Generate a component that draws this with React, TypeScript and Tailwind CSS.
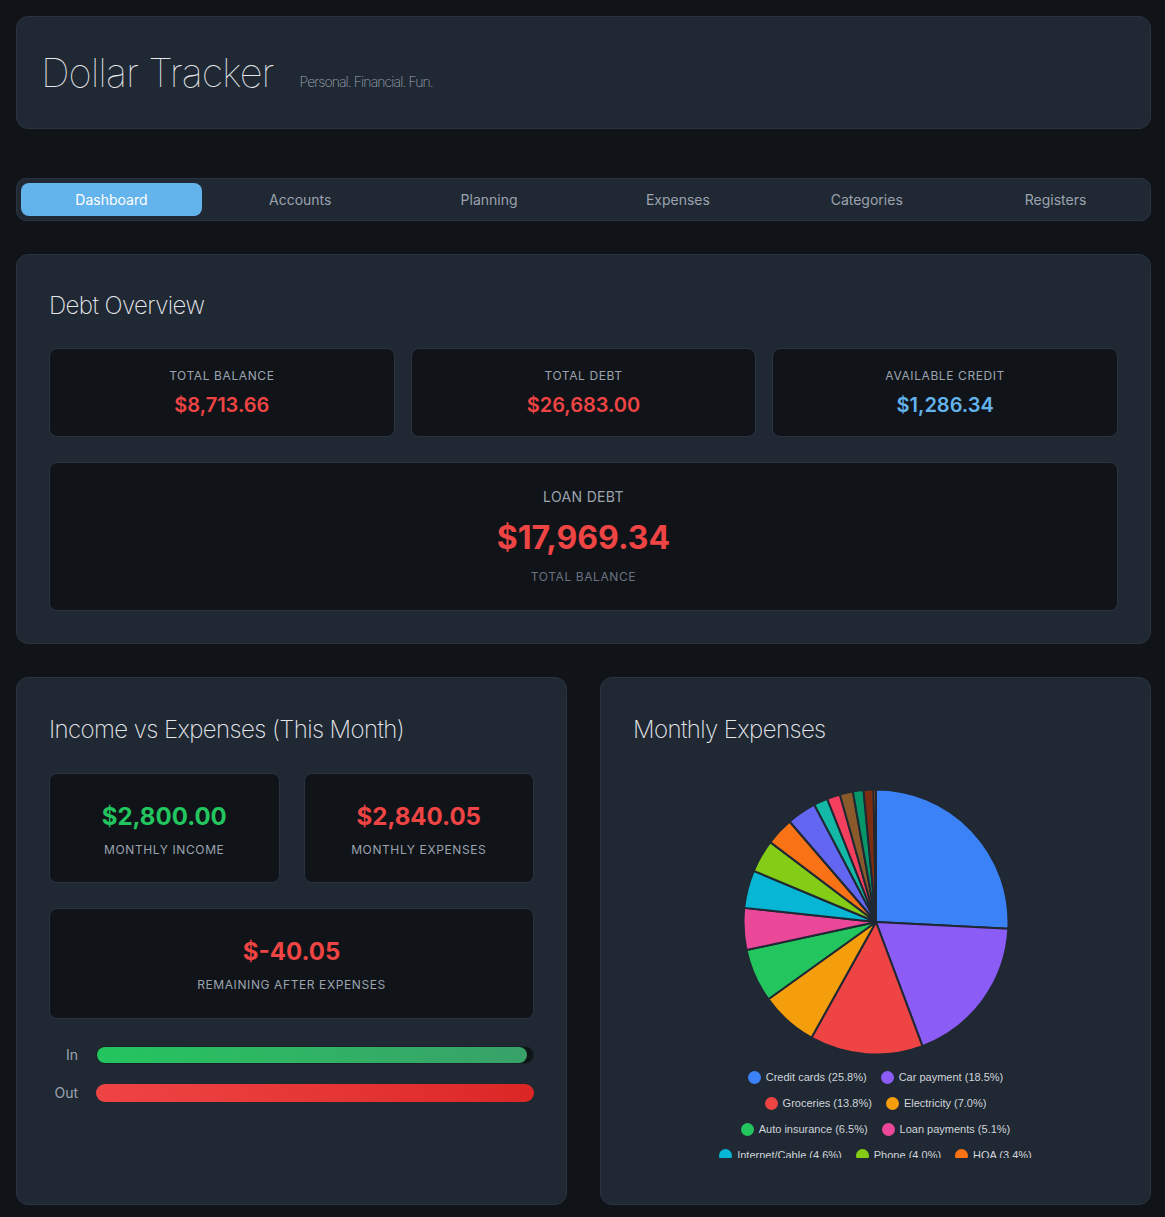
import React from "react"

const tabs = ["Dashboard", "Accounts", "Planning", "Expenses", "Categories", "Registers"]

const slices = [
  { label: "Credit cards", pct: 25.8, color: "#3b82f6" },
  { label: "Car payment", pct: 18.5, color: "#8b5cf6" },
  { label: "Groceries", pct: 13.8, color: "#ef4444" },
  { label: "Electricity", pct: 7.0, color: "#f59e0b" },
  { label: "Auto insurance", pct: 6.5, color: "#22c55e" },
  { label: "Loan payments", pct: 5.1, color: "#ec4899" },
  { label: "Internet/Cable", pct: 4.6, color: "#06b6d4" },
  { label: "Phone", pct: 4.0, color: "#84cc16" },
  { label: "HOA", pct: 3.4, color: "#f97316" },
  { label: "Subscriptions", pct: 3.6, color: "#6366f1" },
  { label: "Gas", pct: 1.7, color: "#14b8a6" },
  { label: "Dining", pct: 1.6, color: "#f43f5e" },
  { label: "Water", pct: 1.6, color: "#8b5a2b" },
  { label: "Gym", pct: 1.3, color: "#059669" },
  { label: "Trash", pct: 1.2, color: "#7c2d12" },
  { label: "Misc", pct: 0.3, color: "#ea580c" },
]

// legend rows the way the chart packs them
const legendRows = [
  [0, 1],
  [2, 3],
  [4, 5],
  [6, 7, 8],
]

function PieChart() {
  const cx = 134
  const cy = 134
  const r = 132.5
  const total = slices.reduce((s, x) => s + x.pct, 0)
  let acc = 0
  return (
    <svg width="268" height="268" viewBox="0 0 268 268">
      {slices.map((s) => {
        const a0 = (acc / total) * Math.PI * 2 - Math.PI / 2
        acc += s.pct
        const a1 = (acc / total) * Math.PI * 2 - Math.PI / 2
        const x0 = cx + r * Math.cos(a0)
        const y0 = cy + r * Math.sin(a0)
        const x1 = cx + r * Math.cos(a1)
        const y1 = cy + r * Math.sin(a1)
        const large = a1 - a0 > Math.PI ? 1 : 0
        return (
          <path
            key={s.label}
            d={`M${cx} ${cy} L${x0} ${y0} A${r} ${r} 0 ${large} 1 ${x1} ${y1} Z`}
            fill={s.color}
            stroke="#1f2833"
            strokeWidth="2"
            strokeLinejoin="round"
          />
        )
      })}
    </svg>
  )
}

function StatCard({ label, value, color }: { label: string; value: string; color: string }) {
  return (
    <div className="rounded-lg border border-[#2a3441] bg-[#101419] pt-[17px] pb-[17px] text-center">
      <div className="text-xs leading-[19px] uppercase tracking-wider text-[#9ca3af]">{label}</div>
      <div className={`mt-[6px] text-xl leading-7 font-semibold ${color}`}>{value}</div>
    </div>
  )
}

function BigStat({ value, label, color, pb }: { value: string; label: string; color: string; pb: string }) {
  return (
    <div className={`rounded-lg border border-[#2a3441] bg-[#101419] px-4 pt-[25px] text-center ${pb}`}>
      <div className={`text-2xl leading-9 font-bold ${color}`}>{value}</div>
      <div className="mt-[7px] text-xs leading-4 uppercase tracking-wider text-[#9ca3af]">{label}</div>
    </div>
  )
}

export default function App() {
  return (
    <div className="min-h-screen bg-[#101418] pt-4 pb-4 pl-4 pr-[14px] font-['Inter',sans-serif]">
      {/* header */}
      <header className="flex items-baseline gap-[26px] rounded-xl border border-[#2a3441] bg-[#1f2833] px-6 pt-8 pb-[31px]">
        <h1 className="text-[40px] leading-[48px] font-thin tracking-tight text-[#e5e7eb]">Dollar Tracker</h1>
        <span className="text-sm font-extralight tracking-[-0.065em] text-[#9ca3af]">Personal. Financial. Fun.</span>
      </header>

      {/* tabs */}
      <nav className="mt-[49px] flex gap-2 rounded-[10px] border border-[#2a3441] bg-[#1f2833] p-1">
        {tabs.map((t, i) => (
          <button
            key={t}
            className={
              i === 0
                ? "flex-1 h-[33px] rounded-lg bg-[#63b3ed] text-sm text-white"
                : "flex-1 h-[33px] rounded-lg text-sm text-[#9ca3af]"
            }
          >
            {t}
          </button>
        ))}
      </nav>

      {/* debt overview */}
      <section className="mt-[33px] rounded-xl border border-[#2a3441] bg-[#1f2833] px-8 pt-[35px] pb-8">
        <h2 className="mb-[26px] text-2xl leading-8 font-extralight tracking-tight text-[#e5e7eb]">Debt Overview</h2>
        <div className="grid grid-cols-3 gap-4">
          <StatCard label="Total Balance" value="$8,713.66" color="text-[#ef4444]" />
          <StatCard label="Total Debt" value="$26,683.00" color="text-[#ef4444]" />
          <StatCard label="Available Credit" value="$1,286.34" color="text-[#63b3ed]" />
        </div>
        <div className="mt-[25px] rounded-lg border border-[#2a3441] bg-[#101419] pt-6 pb-[25px] text-center">
          <div className="text-sm leading-5 uppercase tracking-wide text-[#9ca3af]">Loan Debt</div>
          <div className="mt-[11px] text-[32px] leading-10 font-bold text-[#ef4444]">$17,969.34</div>
          <div className="mt-[11px] text-xs leading-4 uppercase tracking-wider text-[#6b7280]">Total Balance</div>
        </div>
      </section>

      {/* bottom row */}
      <div className="mt-[33px] grid grid-cols-2 gap-[33px]">
        <section className="rounded-xl border border-[#2a3441] bg-[#1f2833] px-8 pt-9 pb-8">
          <h2 className="mb-[27px] text-2xl leading-8 font-extralight tracking-tight text-[#e5e7eb]">Income vs Expenses (This Month)</h2>
          <div className="grid grid-cols-2 gap-6">
            <BigStat value="$2,800.00" label="Monthly Income" color="text-[#22c55e]" pb="pb-6" />
            <BigStat value="$2,840.05" label="Monthly Expenses" color="text-[#ef4444]" pb="pb-6" />
          </div>
          <div className="mt-[25px]">
            <BigStat value="$-40.05" label="Remaining After Expenses" color="text-[#ef4444]" pb="pb-[25px]" />
          </div>
          <div className="mt-[26px] flex flex-col gap-[18px]">
            <div className="flex h-5 items-center gap-[18px]">
              <span className="w-[29px] text-right text-sm text-[#9ca3af]">In</span>
              <div className="h-[18px] flex-1 rounded-full border border-[#1a2229] bg-[#0f1417]">
                <div className="h-full w-[98.6%] rounded-full bg-gradient-to-r from-[#22c55e] to-[#38a169]" />
              </div>
            </div>
            <div className="flex h-5 items-center gap-[18px]">
              <span className="w-[29px] text-right text-sm text-[#9ca3af]">Out</span>
              <div className="h-[18px] flex-1 rounded-full bg-gradient-to-r from-[#ef4444] to-[#dc2626]" />
            </div>
          </div>
        </section>

        <section className="rounded-xl border border-[#2a3441] bg-[#1f2833] px-8 pt-9 pb-8">
          <h2 className="text-2xl leading-8 font-extralight tracking-tight text-[#e5e7eb]">Monthly Expenses</h2>
          <div className="mt-[42px] flex justify-center">
            <PieChart />
          </div>
          <div className="mt-2 mb-[14px] h-[94px] overflow-hidden font-['Liberation_Sans',Arial,sans-serif] text-[11px] text-[#d1d5db]">
            {legendRows.map((row, ri) => (
              <div key={ri} className="flex h-[26px] items-center justify-center gap-[14px]">
                {row.map((idx) => (
                  <div key={idx} className="flex items-center gap-[5px]">
                    <span className="h-[13px] w-[13px] rounded-full" style={{ backgroundColor: slices[idx].color }} />
                    <span>
                      {slices[idx].label} ({slices[idx].pct.toFixed(1)}%)
                    </span>
                  </div>
                ))}
              </div>
            ))}
          </div>
        </section>
      </div>
    </div>
  )
}
